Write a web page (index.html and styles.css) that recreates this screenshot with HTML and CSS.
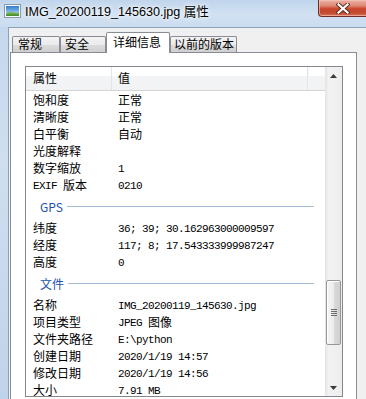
FILE: index.html
```html
<!DOCTYPE html>
<html>
<head>
<meta charset="utf-8">
<link rel="stylesheet" href="styles.css">
</head>
<body>
<div class="window">
  <div class="titlebar">
    <svg class="appicon" width="17" height="14" viewBox="0 0 17 14">
      <defs>
        <linearGradient id="sky" x1="0" y1="0" x2="0" y2="1">
          <stop offset="0" stop-color="#2f7fd0"/>
          <stop offset="1" stop-color="#bfe3f7"/>
        </linearGradient>
        <linearGradient id="grass" x1="0" y1="0" x2="0" y2="1">
          <stop offset="0" stop-color="#8fc85a"/>
          <stop offset="1" stop-color="#3f8a2a"/>
        </linearGradient>
      </defs>
      <rect x="0.5" y="0.5" width="16" height="13" fill="#fbfbfb" stroke="#8a9aa8"/>
      <rect x="2" y="2" width="13" height="10" fill="url(#sky)"/>
      <path d="M2 10 Q6 6.5 10 8.5 T15 7.5 V12 H2 Z" fill="url(#grass)"/>
    </svg>
    <span class="title">IMG_20200119_145630.jpg 属性</span>
    <div class="close">
      <svg width="14" height="11" viewBox="0 0 14 11">
        <path d="M2.5 1.5 L11.5 9.5 M11.5 1.5 L2.5 9.5" stroke="#5a2a22" stroke-width="4" stroke-linecap="square"/>
        <path d="M2.5 1.5 L11.5 9.5 M11.5 1.5 L2.5 9.5" stroke="#ffffff" stroke-width="2.2" stroke-linecap="square"/>
      </svg>
    </div>
  </div>
  <div class="frame">
    <div class="client">
      <div class="tabs">
        <div class="tab t1">常规</div>
        <div class="tab t2">安全</div>
        <div class="tab sel">详细信息</div>
        <div class="tab t4">以前的版本</div>
      </div>
      <div class="panel">
        <div class="listview">
          <div class="list">
            <div class="header">
              <div class="hc c1">属性</div>
              <div class="hc c2">值</div>
              <div class="hc c3"></div>
            </div>
            <div class="row"><div class="c1">饱和度</div><div class="c2">正常</div></div>
            <div class="row"><div class="c1">清晰度</div><div class="c2">正常</div></div>
            <div class="row"><div class="c1">白平衡</div><div class="c2">自动</div></div>
            <div class="row"><div class="c1">光度解释</div><div class="c2"></div></div>
            <div class="row"><div class="c1">数字缩放</div><div class="c2"><span class="m">1</span></div></div>
            <div class="row"><div class="c1"><span class="m">EXIF </span>版本</div><div class="c2"><span class="m">0210</span></div></div>
            <div class="group"><span>GPS</span><i></i></div>
            <div class="row"><div class="c1">纬度</div><div class="c2"><span class="m">36; 39; 30.162963000009597</span></div></div>
            <div class="row"><div class="c1">经度</div><div class="c2"><span class="m">117; 8; 17.543333999987247</span></div></div>
            <div class="row"><div class="c1">高度</div><div class="c2"><span class="m">0</span></div></div>
            <div class="group"><span>文件</span><i></i></div>
            <div class="row"><div class="c1">名称</div><div class="c2"><span class="m">IMG_20200119_145630.jpg</span></div></div>
            <div class="row"><div class="c1">项目类型</div><div class="c2"><span class="m">JPEG </span>图像</div></div>
            <div class="row"><div class="c1">文件夹路径</div><div class="c2"><span class="m">E:\python</span></div></div>
            <div class="row"><div class="c1">创建日期</div><div class="c2"><span class="m">2020/1/19 14:57</span></div></div>
            <div class="row"><div class="c1">修改日期</div><div class="c2"><span class="m">2020/1/19 14:56</span></div></div>
            <div class="row"><div class="c1">大小</div><div class="c2"><span class="m">7.91 MB</span></div></div>
          </div>
          <div class="scrollbar">
            <div class="sbtn"><svg width="7" height="4" viewBox="0 0 7 4"><path d="M3.5 0 L7 4 H0 Z" fill="#3a3a3a"/></svg></div>
            <div class="track-top"></div>
            <div class="thumb"><div class="grip"><b></b><b></b><b></b><b></b></div></div>
            <div class="track-bot"></div>
            <div class="sbtn"><svg width="7" height="4" viewBox="0 0 7 4"><path d="M0 0 H7 L3.5 4 Z" fill="#3a3a3a"/></svg></div>
          </div>
        </div>
      </div>
    </div>
  </div>
</div>
</body>
</html>
```

FILE: styles.css
```css
html, body {
  margin: 0;
  padding: 0;
}
body {
  width: 366px;
  height: 399px;
  overflow: hidden;
  font-family: "Noto Sans CJK SC", sans-serif;
  font-size: 12px;
  color: #000;
  background: linear-gradient(180deg, #c2d6ec 0%, #cfdff1 40%, #bfd3ea 100%);
}
.window {
  display: flex;
  flex-direction: column;
  width: 366px;
  height: 399px;
}
.titlebar {
  height: 27px;
  display: flex;
  align-items: flex-start;
  background: linear-gradient(180deg, #c0d5ec 0%, #d2e1f2 55%, #cadcf0 100%);
  flex: none;
}
.appicon {
  margin: 4px 0 0 4px;
  flex: none;
}
.title {
  margin: 4px 0 0 4px;
  font-family: "Liberation Sans", "Noto Sans CJK SC", sans-serif;
  font-size: 12.6px;
  line-height: 16px;
  color: #000;
  text-shadow: 0 0 6px #ffffff, 0 0 3px #ffffff;
  white-space: nowrap;
}
.close {
  margin-left: auto;
  margin-right: -4px;
  width: 52px;
  height: 17px;
  box-sizing: border-box;
  border: 1px solid #6e2e25;
  border-top: none;
  border-radius: 0 0 0 4px;
  background: linear-gradient(180deg, #eab3a6 0%, #e08a76 35%, #c8462d 55%, #c14a2f 80%, #d9735a 100%);
  box-shadow: inset 0 0 0 1px rgba(255, 200, 190, 0.6);
  display: flex;
  justify-content: flex-start;
  align-items: center;
  padding-left: 17px;
  flex: none;
}
.frame {
  flex: 1;
  display: flex;
  padding-left: 8px;
  min-height: 0;
}
.client {
  flex: 1;
  background: #f0f0f0;
  border-top: 1px solid #8ca1ba;
  border-left: 1px solid #8ca1ba;
  padding: 4px 9px 0 1px;
  display: flex;
  flex-direction: column;
  min-height: 0;
}
.tabs {
  display: flex;
  align-items: flex-end;
  height: 20px;
  padding-left: 2px;
  flex: none;
  position: relative;
  z-index: 1;
}
.tab {
  box-sizing: border-box;
  height: 16px;
  border: 1px solid #898c95;
  border-bottom: none;
  border-radius: 2px 2px 0 0;
  background: linear-gradient(180deg, #f3f3f3 0%, #ebebeb 50%, #dcdcdc 51%, #cfcfcf 100%);
  line-height: 14px;
  white-space: nowrap;
  font-size: 12px;
}
.t1 { width: 48px; padding-left: 5px; }
.t2 { width: 46px; padding-left: 4px; }
.t4 { width: 67px; padding-left: 3px; }
.tab.sel {
  width: 64px;
  height: 21px;
  margin-bottom: -1px;
  background: #ffffff;
  padding-left: 6px;
  line-height: 17px;
}
.panel {
  flex: 1;
  min-height: 0;
  background: #ffffff;
  border: 1px solid #898c95;
  border-bottom: none;
  padding: 13px 13px 0 14px;
  display: flex;
  flex-direction: column;
}
.listview {
  height: 331px;
  box-sizing: border-box;
  border: 1px solid #828790;
  display: flex;
  flex: none;
  background: #ffffff;
}
.list {
  flex: 1;
  overflow: hidden;
  display: flex;
  flex-direction: column;
}
.header {
  height: 23px;
  flex: none;
  display: flex;
  border-bottom: 1px solid #d5d5d5;
  background: linear-gradient(180deg, #ffffff 0%, #ffffff 40%, #f3f4f6 41%, #f1f2f4 100%);
}
.hc {
  line-height: 22px;
  box-sizing: border-box;
  border-right: 1px solid #e3e4e6;
  white-space: nowrap;
}
.hc.c1 { width: 86px; padding-left: 7px; }
.hc.c2 { width: 196px; padding-left: 6px; }
.hc.c3 { flex: 1; border-left: 1px solid #f7f7f7; border-right: none; }
.row {
  height: 17px;
  flex: none;
  display: flex;
  line-height: 17px;
  white-space: nowrap;
}
.row .c1 { width: 86px; padding-left: 7px; box-sizing: border-box; }
.row .c2 { padding-left: 6px; }
.m {
  font-family: "Liberation Mono", monospace;
  font-size: 11px;
  letter-spacing: -0.6px;
  vertical-align: 1px;
}
.group {
  height: 26px;
  flex: none;
  display: flex;
  align-items: center;
  padding: 0 11px 0 14px;
  color: #2051b0;
  font-size: 12px;
  line-height: 16px;
}
.group span {
  margin-top: 1px;
}
.group i {
  flex: 1;
  height: 1px;
  background: #a3bcd8;
  margin-left: 4px;
}
.scrollbar {
  width: 17px;
  flex: none;
  display: flex;
  flex-direction: column;
  background: linear-gradient(90deg, #e3e3e3 0%, #f2f2f2 20%, #ededed 100%);
}
.sbtn {
  height: 17px;
  flex: none;
  display: flex;
  justify-content: center;
  align-items: center;
}
.track-top {
  height: 196px;
  flex: none;
}
.track-bot {
  flex: 1;
}
.thumb {
  height: 65px;
  flex: none;
  margin: 0 1px;
  box-sizing: border-box;
  border: 1px solid #979797;
  border-radius: 2px;
  background: linear-gradient(90deg, #f5f5f5 0%, #ececec 50%, #dbdbdb 51%, #cfcfcf 100%);
  box-shadow: inset 1px 1px 0 #ffffff;
  display: flex;
  justify-content: center;
  align-items: center;
}
.grip {
  display: flex;
  flex-direction: column;
  gap: 1px;
}
.grip b {
  display: block;
  width: 6px;
  height: 1px;
  background: #6c6c6c;
}
```
